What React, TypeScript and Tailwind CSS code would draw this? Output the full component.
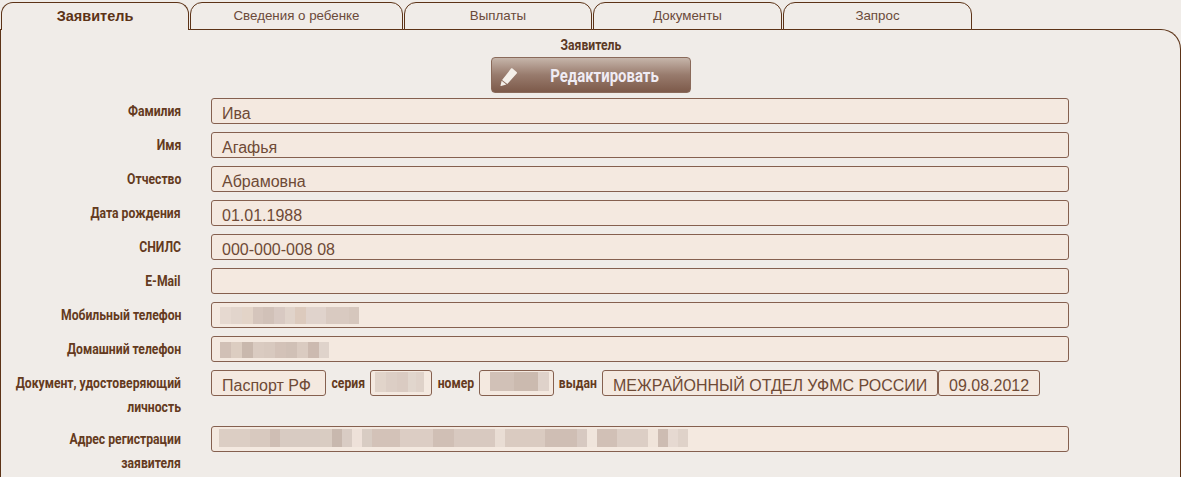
import React from "react";

const sans = "font-['Liberation_Sans',Arial,sans-serif]";
const narrow = "font-['Roboto',sans-serif]";

type Blur = [number, string][];

function Smudge({ blocks, h = "h-[20px]", className = "" }: { blocks: Blur; h?: string; className?: string }) {
  return (
    <div className={`flex ${h} ${className}`}>
      {blocks.map(([w, c], i) => (
        <div key={i} style={{ width: w, backgroundColor: c }} />
      ))}
    </div>
  );
}

const Label = ({ children }: { children: React.ReactNode }) => (
  <div className="flex w-[180px] shrink-0 justify-end">
    <div className={`shrink-0 origin-right translate-y-px scale-x-[.87] whitespace-nowrap text-right text-[14px] leading-[24px] font-bold text-[#643a20] ${narrow}`}>
      {children}
    </div>
  </div>
);

const Inline = ({ children, className = "" }: { children: React.ReactNode; className?: string }) => (
  <div className={`flex h-[26px] shrink-0 justify-center ${className}`}>
    <span className={`shrink-0 scale-x-[.87] whitespace-nowrap text-[14px] leading-[26px] font-bold text-[#643a20] ${narrow}`}>{children}</span>
  </div>
);

const Field = ({ children, className = "w-[858px]" }: { children?: React.ReactNode; className?: string }) => (
  <div className={`h-[26px] shrink-0 rounded-[3px] border border-[#85604f] bg-[#f4e9e0] pl-[10px] pt-[3px] text-[16px] leading-[24px] text-[#6e4a36] ${sans} ${className}`}>
    {children}
  </div>
);

const Row = ({ label, children }: { label: React.ReactNode; children?: React.ReactNode }) => (
  <div className="flex gap-[30px]">
    <Label>{label}</Label>
    <div className="flex">{children}</div>
  </div>
);

const tabs = [
  ["Заявитель", "w-[188px]"],
  ["Сведения о ребенке", "w-[213px]"],
  ["Выплаты", "w-[188px]"],
  ["Документы", "w-[189px]"],
  ["Запрос", "w-[189px]"],
];

export default function App() {
  return (
    <div className={`h-[477px] w-[1181px] overflow-hidden bg-[#f0ece8] ${sans}`}>
      <div className="relative z-10 flex h-[30px] gap-px pl-px pt-[2px]">
        {tabs.map(([t, w], i) => (
          <div
            key={t}
            className={`${w} rounded-t-[12px] border border-[#5c3317] bg-[#f0ece8] text-center ${
              i === 0 ? "h-[28px] border-b-0 text-[14.5px] font-bold leading-[27px] text-[#5c3317]" : "h-[28px] text-[13.33px] leading-[26px] text-[#6b4a3a]"
            }`}
          >
            {t}
          </div>
        ))}
      </div>
      <div className="-mt-px h-[460px] w-[1181px] rounded-tr-[20px] border-t border-r border-l border-[#5c3317]">
        <div className="flex justify-center pt-[7px]">
          <div className={`scale-x-[.87] text-[14px] leading-[16px] font-bold text-[#5c3a26] ${narrow}`}>Заявитель</div>
        </div>
        <div className="mt-[4px] flex justify-center">
          <div className="relative flex h-[36px] w-[200px] items-center justify-center rounded-[4px] border border-[#8a6a5a] bg-gradient-to-b from-[#c6b5aa] via-[#987b6d] to-[#7d5a4a] pl-[27px]">
            <svg className="absolute left-[7px] top-[8px] h-[20px] w-[20px]" viewBox="0 0 20 20" fill="#f4efe9">
              <path d="M13.2 2.3 17.6 6c.5.4.5 1 .1 1.5L8.3 18 3.1 14 12 2.6c.3-.4.8-.6 1.2-.3Z" />
              <path d="M2.6 14.8 7.4 18.6 1.4 20.2Z" />
            </svg>
            <span className={`scale-x-[.83] text-[18px] font-bold text-[#f0ecf4] ${narrow}`}>Редактировать</span>
          </div>
        </div>
        <div className="mt-[5px] flex flex-col gap-[8px]">
          <Row label="Фамилия"><Field>Ива</Field></Row>
          <Row label="Имя"><Field>Агафья</Field></Row>
          <Row label="Отчество"><Field>Абрамовна</Field></Row>
          <Row label="Дата рождения"><Field>01.01.1988</Field></Row>
          <Row label="СНИЛС"><Field>000-000-008 08</Field></Row>
          <Row label="E-Mail"><Field /></Row>
          <Row label="Мобильный телефон">
            <Field className="w-[858px] !pl-[8px] !pt-[4px]">
              <Smudge h="h-[17px]" blocks={[[11, "#e6d9d0"], [11, "#e2d5cc"], [11, "#e3d4c8"], [10, "#d5c5bc"], [11, "#d1c1b8"], [11, "#d8c9c2"], [10, "#e0d3ca"], [11, "#dccabd"], [20, "#e0d3cc"], [23, "#d9cac1"], [10, "#d6c7bd"]]} />
            </Field>
          </Row>
          <Row label="Домашний телефон">
            <Field className="w-[858px] !pl-[8px] !pt-[5px]">
              <Smudge h="h-[16px]" blocks={[[11, "#d1c0b6"], [11, "#dccdc1"], [11, "#c9b8ad"], [11, "#dacbc1"], [11, "#d8c9bf"], [11, "#d3c2b8"], [11, "#d0c0b6"], [11, "#dacbc1"], [11, "#ccbab0"], [10, "#dfd3cb"]]} />
            </Field>
          </Row>
          <div className="flex gap-[30px]">
            <Label>
              Документ, удостоверяющий
              <br />
              личность
            </Label>
            <div className="flex items-start">
              <Field className="w-[115px]">Паспорт РФ</Field>
              <Inline className="w-[44px]">серия</Inline>
              <Field className="w-[62px] !pl-[4px] !pt-[1px]">
                <Smudge h="h-[20px]" blocks={[[11, "#e1d4ca"], [11, "#dccec5"], [11, "#dacbc2"], [8, "#e1d6cd"], [8, "#dfd2c9"]]} />
              </Field>
              <Inline className="w-[47px]">номер</Inline>
              <Field className="w-[75px] !pl-[10px] !pt-[1px]">
                <Smudge h="h-[19px]" blocks={[[24, "#d1c1b7"], [24, "#cbbaaf"], [11, "#dfd2ca"]]} />
              </Field>
              <Inline className="w-[48px]">выдан</Inline>
              <Field className="w-[336px]">МЕЖРАЙОННЫЙ ОТДЕЛ УФМС РОССИИ</Field>
              <Field className="w-[102px]">09.08.2012</Field>
            </div>
          </div>
          <Row
            label={
              <>
                Адрес регистрации
                <br />
                заявителя
              </>
            }
          >
            <Field className="w-[858px] !pl-[7px] !pt-[2px]">
              <Smudge
                h="h-[18px]"
                blocks={[[31, "#dccec4"], [20, "#d8c9bf"], [10, "#cfbeb4"], [40, "#d8cbc2"], [12, "#d9ccc2"], [10, "#c8b8ae"], [10, "#d9ccc4"], [10, "#eee1d9"], [10, "#d8ccc3"], [28, "#d3c2b8"], [33, "#dccdc4"], [21, "#d0bfb5"], [41, "#d8c9c0"], [10, "#e9ddd4"], [40, "#dacbc1"], [32, "#cfbeb4"], [10, "#d7c9c1"], [10, "#f0e5dc"], [20, "#d1c0b6"], [31, "#dccec5"], [10, "#f0e4da"], [10, "#cdbcb2"], [10, "#e6d9d1"], [10, "#dfd2c9"]]}
              />
            </Field>
          </Row>
        </div>
      </div>
    </div>
  );
}
